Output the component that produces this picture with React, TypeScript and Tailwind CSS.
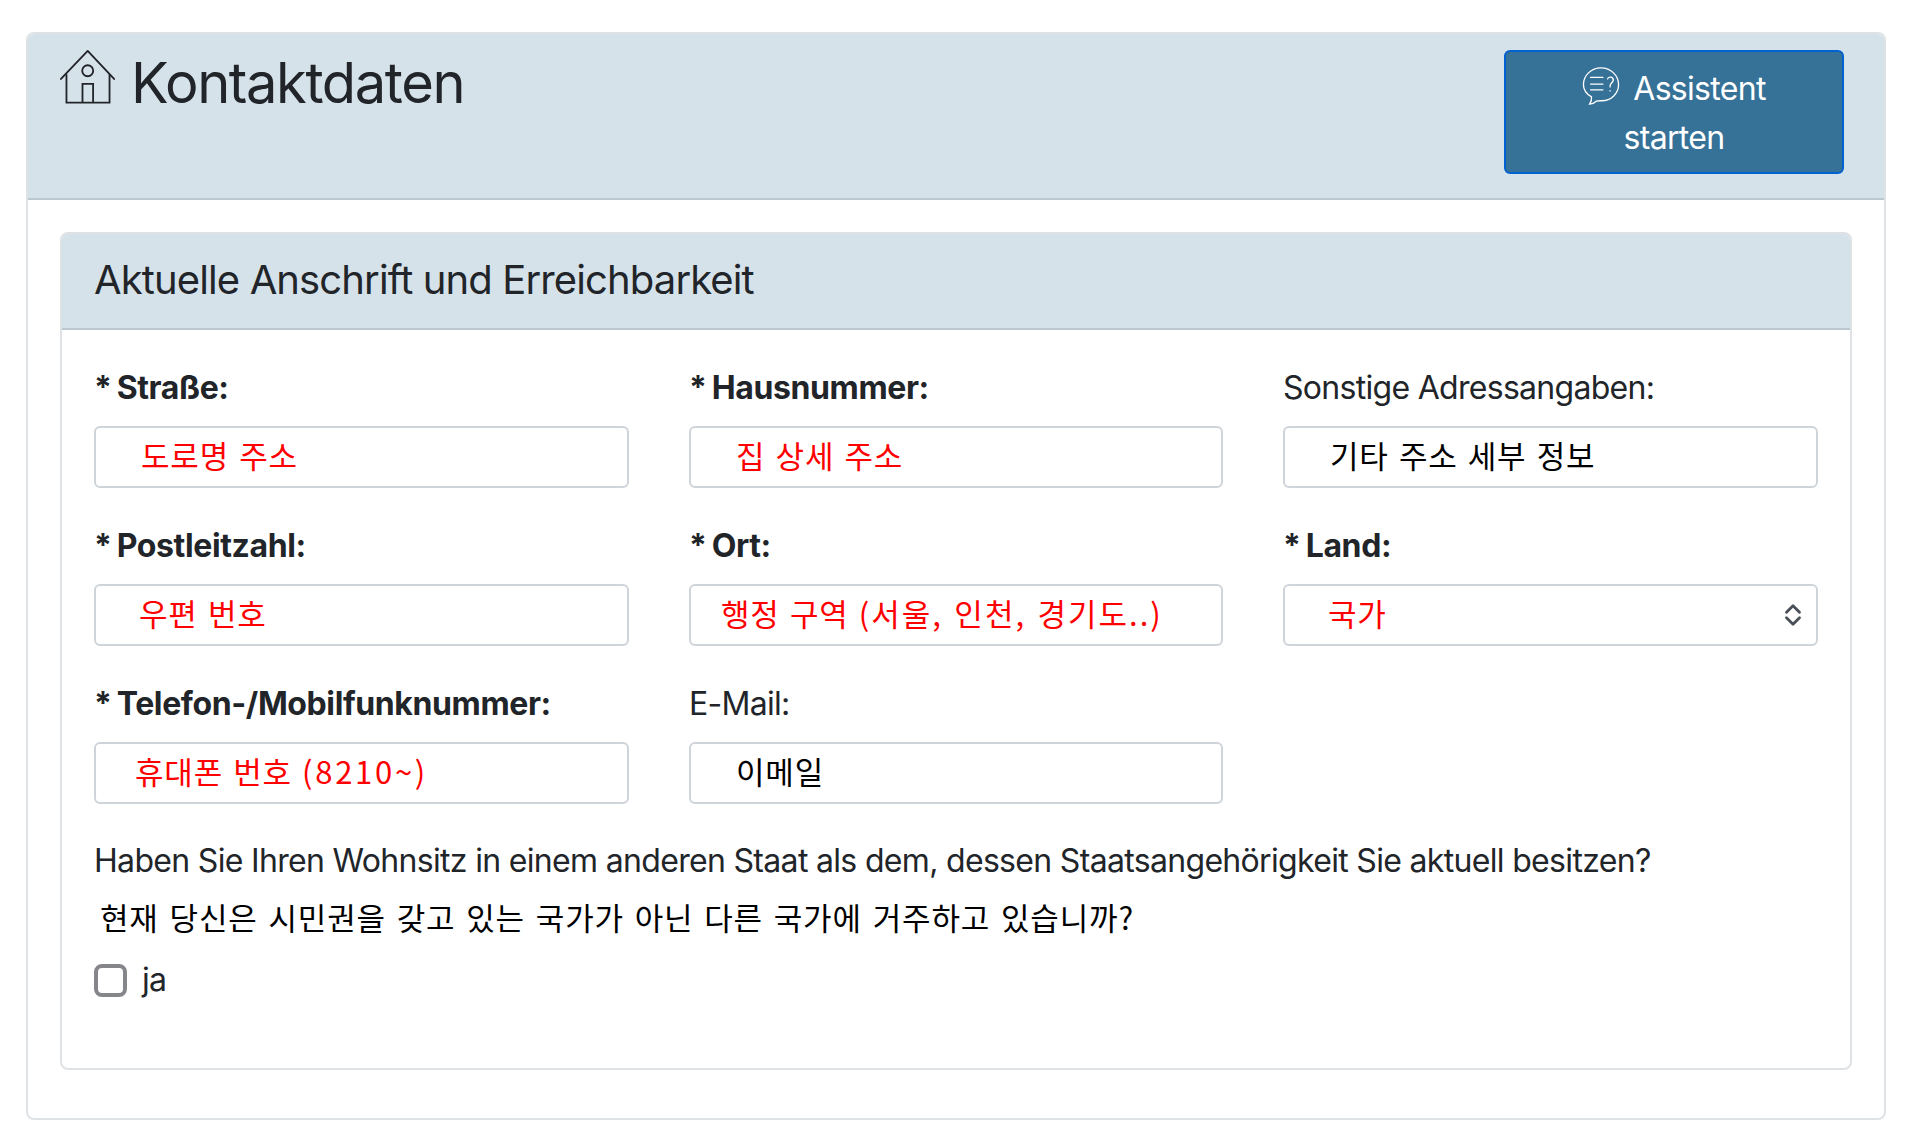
const inter = "font-['Inter','Noto_Sans_CJK_KR',sans-serif]";

function Label({ children, bold }: { children: React.ReactNode; bold?: boolean }) {
  return (
    <div className={`h-[40px] pt-[1px] mb-[19px] text-[32px] leading-[40px] text-[#212529] ${bold ? "font-bold tracking-[-0.012em] [word-spacing:-2px]" : "font-normal tracking-[-0.022em]"}`}>
      {children}
    </div>
  );
}

function Field({ label, bold, children, red, pad, select }: { label: string; bold?: boolean; children: React.ReactNode; red?: boolean; pad: string; select?: boolean }) {
  return (
    <div className="w-full">
      <Label bold={bold}>{label}</Label>
      <div className={`h-[62px] flex items-center justify-between border-2 border-[#ced4da] rounded-[6px] bg-white ${pad} pr-[13px] text-[31px] tracking-[0.8px] [word-spacing:2.500px] ${red ? "text-[#ff0000]" : "text-black"} font-['Noto_Sans_CJK_KR','Inter',sans-serif]`}>
        <span className="whitespace-pre pb-[3px]">{children}</span>
        {select && (
          <svg width="20" height="26" viewBox="0 0 18 24" fill="none" stroke="#495057" strokeWidth="2.600" strokeLinecap="round" strokeLinejoin="round">
            <path d="M3 9.500 9 3.500l6 6" />
            <path d="M3 14.500l6 6 6-6" />
          </svg>
        )}
      </div>
    </div>
  );
}

export default function App() {
  return (
    <div className={`min-h-[1137px] bg-white pt-[32px] pl-[26px] pr-[20px] ${inter}`}>
      <div className="w-[1860px] h-[1088px] border-2 border-[#dfe2e5] rounded-[8px] overflow-hidden">
        <div className="h-[166px] bg-[#d6e2ea] border-b-2 border-[#bcc8cf] flex justify-between pl-[32px] pr-[40px] pt-[16px]">
          <div className="flex items-start gap-[15px]">
            <svg width="56" height="58" viewBox="0 0 58 60" fill="none" stroke="#212529" strokeWidth="1.900" className="-mt-[1px]">
              <path d="M1 31 28.700 2 56 31" strokeLinecap="round" strokeLinejoin="round" />
              <path d="M6.700 26v29.500h44.600V26" />
              <path d="M23.300 55.500V36h11v19.500" />
              <circle cx="28.700" cy="22.500" r="5.700" />
            </svg>
            <h1 className="mt-[1px] text-[56px] leading-[65px] tracking-[-0.025em] font-normal text-[#212529]">Kontaktdaten</h1>
          </div>
          <button className="w-[340px] h-[124px] pt-[2px] flex flex-col items-center justify-center bg-[#367197] border-2 border-[#0061d0] rounded-[6px] text-white text-[32px] tracking-[-0.022em] leading-[49px]">
            <span className="flex h-[49px] items-center gap-[13px]">
              <svg width="38" height="44" viewBox="0 0 40 42" fill="none" stroke="#ffffff" strokeWidth="1.400" strokeLinecap="round" className="-mt-[6px]">
                <path d="M10 32.500C4.500 29.500 1.500 25 1.500 19.500 1.500 10 9.500 2 20 2s18.500 8 18.500 17.500S30.500 37 20 36.500c-2 0-3.500 0-5 .5-2 2-4 3-7 3 1.500-2 2.500-4 2-7.500Z" />
                <path d="M9 12h13M9 19h13M9 25h13" />
                <path d="M27 13.500c.5-2 4-2.500 5.500-.5 1.500 2.500-.5 4-2 5.500-.7.8-1 1.500-1 3.500M29.500 26v.3" />
              </svg>
              Assistent
            </span>
            <span className="h-[49px]">starten</span>
          </button>
        </div>

        <div className="pt-[32px] px-[32px]">
          <div className="w-[1792px] h-[838px] border-2 border-[#dfe2e5] rounded-[8px] overflow-hidden">
            <div className="h-[96px] bg-[#d6e2ea] border-b-2 border-[#bcc8cf] pl-[32px] pb-[2px] flex items-center">
              <h2 className="text-[40px] font-normal tracking-[-0.022em] text-[#212529] leading-[46px]">Aktuelle Anschrift und Erreichbarkeit</h2>
            </div>
            <div className="pt-[37px] px-[32px]">
              <div className="grid grid-cols-[535px_534px_535px] gap-x-[60px] gap-y-[37px]">
                <Field bold label="* Straße:" red pad="pl-[45px]">도로명 주소</Field>
                <Field bold label="* Hausnummer:" red pad="pl-[45px]">집 상세 주소</Field>
                <Field label="Sonstige Adressangaben:" pad="pl-[45px]">기타 주소 세부 정보</Field>
                <Field bold label="* Postleitzahl:" red pad="pl-[43px]">우편 번호</Field>
                <Field bold label="* Ort:" red pad="pl-[30px]">행정 구역 <span className="tracking-[2px]">(서울, 인천, 경기도..)</span></Field>
                <Field bold label="* Land:" red pad="pl-[43px]" select>국가</Field>
                <Field bold label="* Telefon-/Mobilfunknummer:" red pad="pl-[39px]">휴대폰 번호 <span className="tracking-[2.700px]">(8210~)</span></Field>
                <Field label="E-Mail:" pad="pl-[45px]">이메일</Field>
              </div>
              <p className="mt-[34px] text-[32px] leading-[46px] tracking-[-0.0212em] text-[#212529] whitespace-nowrap">
                Haben Sie Ihren Wohnsitz in einem anderen Staat als dem, dessen Staatsangehörigkeit Sie aktuell besitzen?
              </p>
              <p className="mt-[10px] pl-[6px] text-[31px] leading-[46px] tracking-[0.85px] [word-spacing:3px] text-black font-['Noto_Sans_CJK_KR',sans-serif] whitespace-nowrap">
                현재 당신은 시민권을 갖고 있는 국가가 아닌 다른 국가에 거주하고 있습니까?
              </p>
              <div className="mt-[20px] flex items-center gap-[15px]">
                <span className="w-[33px] h-[33px] rounded-[8px] border-[4px] border-[#85868a] bg-white" />
                <span className="text-[32px] leading-[40px] tracking-[-0.022em] text-[#212529]">ja</span>
              </div>
            </div>
          </div>
        </div>
      </div>
    </div>
  );
}
